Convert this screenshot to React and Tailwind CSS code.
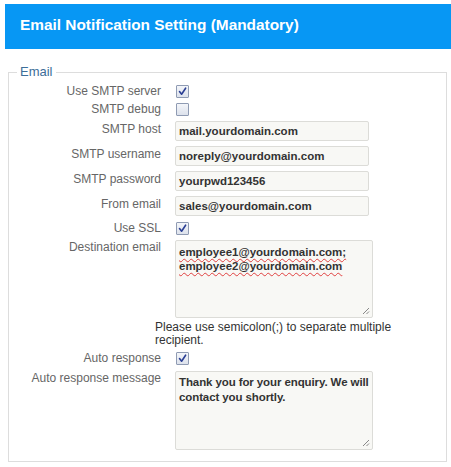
import React from "react";

const Check = ({ checked }) => (
  <div className="w-[13px] h-[13px] border border-[#8f9bb3] rounded-[1px] bg-gradient-to-b from-[#f4f6fa] to-[#dde2ec] flex items-center justify-center">
    {checked && (
      <svg width="9" height="9" viewBox="0 0 9 9">
        <path d="M1.5 4.6 L3.6 7.2 L7.6 1.2" fill="none" stroke="#2b3f94" strokeWidth="1.6" strokeLinecap="round" strokeLinejoin="round" />
      </svg>
    )}
  </div>
);

const Grip = () => (
  <svg className="absolute right-[2px] bottom-[2px]" width="8" height="8" viewBox="0 0 8 8">
    <path d="M7 1 L1 7 M7 4.5 L4.5 7" stroke="#888" strokeWidth="1" />
  </svg>
);

const Label = ({ children, className = "" }) => (
  <div className={"w-[152px] text-right text-[12px] leading-[14px] text-[#666] shrink-0 " + className}>{children}</div>
);

const CheckRow = ({ label, checked, className = "" }) => (
  <div className={"flex items-center h-[14px] gap-[15px] " + className}>
    <Label>{label}</Label>
    <Check checked={checked} />
  </div>
);

const InputRow = ({ label, value, className = "" }) => (
  <div className={"flex items-start gap-[14px] " + className}>
    <Label className="pt-[1px]">{label}</Label>
    <div className="w-[194px] h-[20px] border border-[#dcdcd8] rounded-[2px] bg-[#f8f8f5] pl-[3px] text-[11.5px] leading-[18px] font-bold text-[#333]">
      {value}
    </div>
  </div>
);

export default function App() {
  return (
    <div className="w-[451px] h-[467px] bg-white pt-[4px] pl-[5px]" style={{ fontFamily: '"Liberation Sans", Arial, sans-serif' }}>
      <div className="h-[45px] bg-[#0797f4] flex items-center pl-[15px] pb-[3px]">
        <span className="text-white font-bold text-[15.4px]">Email Notification Setting (Mandatory)</span>
      </div>
      <fieldset className="mt-[15px] ml-[3px] mr-[4px] border border-[#dddddd] pb-[11px]">
        <legend className="ml-[8px] px-[3px] text-[13px] leading-[16px] text-[#3d6e99]">Email</legend>
        <CheckRow label="Use SMTP server" checked className="mt-[4px]" />
        <CheckRow label="SMTP debug" className="mt-[4px]" />
        <InputRow label="SMTP host" value="mail.yourdomain.com" className="mt-[5px]" />
        <InputRow label="SMTP username" value="noreply@yourdomain.com" className="mt-[5px]" />
        <InputRow label="SMTP password" value="yourpwd123456" className="mt-[5px]" />
        <InputRow label="From email" value="sales@yourdomain.com" className="mt-[5px]" />
        <CheckRow label="Use SSL" checked className="mt-[5px]" />
        <div className="flex items-start gap-[14px] mt-[5px]">
          <Label>Destination email</Label>
          <div className="relative w-[198px] h-[78px] border border-[#dcdcd8] rounded-[2px] bg-[#f8f8f5] pl-[3px] pt-[4px] text-[11.5px] leading-[14px] font-bold text-[#333] whitespace-nowrap">
            <div><span className="underline decoration-wavy decoration-[#e04040] decoration-1 underline-offset-2">employee1@yourdomain.com;</span></div>
            <div><span className="underline decoration-wavy decoration-[#e04040] decoration-1 underline-offset-2">employee2@yourdomain.com</span></div>
            <Grip />
          </div>
        </div>
        <div className="ml-[146px] mt-[3px] text-[12px] leading-[13px] text-[#333]">
          Please use semicolon(;) to separate multiple
          <br />
          recipient.
        </div>
        <CheckRow label="Auto response" checked className="mt-[4px]" />
        <div className="flex items-start gap-[14px] mt-[6px]">
          <Label>Auto response message</Label>
          <div className="relative w-[198px] h-[79px] border border-[#dcdcd8] rounded-[2px] bg-[#f8f8f5] pl-[3px] pt-[3px] text-[11.5px] leading-[15px] font-bold text-[#333] whitespace-nowrap tracking-[-0.1px]">
            <div>Thank you for your enquiry. We will</div>
            <div>contact you shortly.</div>
            <Grip />
          </div>
        </div>
      </fieldset>
    </div>
  );
}
